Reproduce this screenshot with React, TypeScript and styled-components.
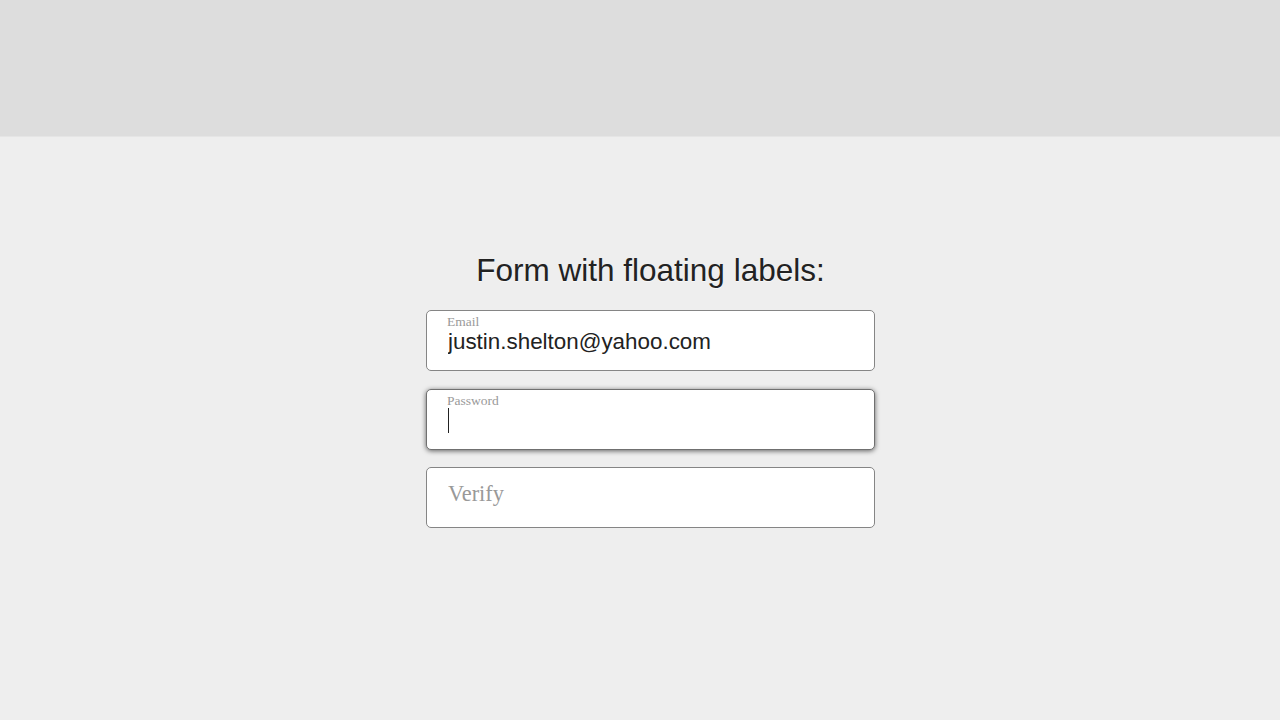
import React from "react";
import styled, { createGlobalStyle, css } from "styled-components";

const Global = createGlobalStyle`
  html, body { margin: 0; padding: 0; background: #eeeeee; }
  body { font-family: "Liberation Sans", Arial, sans-serif; }
  * { box-sizing: border-box; }
`;

const Page = styled.div`
  display: flex;
  flex-direction: column;
  min-height: 720px;
  background: #eeeeee;
`;

const Header = styled.header`
  height: 137px;
  background: #dddddd;
  border-bottom: 1px solid #e5e5e5;
`;

const Main = styled.main`
  display: flex;
  flex-direction: column;
  align-items: center;
  padding: 114px 0 0 21px;
`;

const Title = styled.h1`
  margin: 0 0 21px;
  font-family: "Liberation Sans", Arial, sans-serif;
  font-weight: 400;
  font-size: 31.5px;
  line-height: 38px;
  color: #222222;
  text-shadow: 0 1px 0 rgba(255, 255, 255, 0.6);
`;

const Form = styled.form`
  width: 449px;
  display: flex;
  flex-direction: column;
  gap: 17.5px;
`;

const Field = styled.div`
  position: relative;
  height: 61px;
`;

const Input = styled.input<{ $floated: boolean; $focused?: boolean }>`
  display: block;
  width: 100%;
  height: 61px;
  margin: 0;
  border: 1px solid #858585;
  border-radius: 5px;
  background: #ffffff;
  outline: none;
  font-family: "Liberation Sans", Arial, sans-serif;
  font-size: 22.4px;
  line-height: 25px;
  color: #222222;
  padding: ${(p) => (p.$floated ? "18px 21px 16px" : "13px 21px 21px")};
  caret-color: transparent;
  &::placeholder {
    font-family: "Liberation Serif", "Times New Roman", serif;
    font-size: 22.4px;
    color: #999999;
    opacity: 1;
  }
  ${(p) =>
    p.$focused &&
    css`
      border-color: #707070;
      box-shadow: 0 1px 5px rgba(0, 0, 0, 0.6);
    `}
`;

const FloatLabel = styled.label`
  position: absolute;
  left: 21px;
  top: 4px;
  font-family: "Liberation Serif", "Times New Roman", serif;
  font-size: 13.5px;
  line-height: 15px;
  color: #999999;
  pointer-events: none;
`;

const Caret = styled.span`
  position: absolute;
  left: 22px;
  top: 19px;
  width: 1px;
  height: 25px;
  background: #222222;
`;

export default function App() {
  return (
    <Page>
      <Global />
      <Header />
      <Main>
        <Title>Form with floating labels:</Title>
        <Form onSubmit={(e) => e.preventDefault()}>
          <Field>
            <FloatLabel htmlFor="email">Email</FloatLabel>
            <Input
              id="email"
              type="email"
              $floated
              defaultValue="justin.shelton@yahoo.com"
            />
          </Field>
          <Field>
            <FloatLabel htmlFor="password">Password</FloatLabel>
            <Input id="password" type="password" $floated $focused />
            <Caret />
          </Field>
          <Field>
            <Input id="verify" type="password" $floated={false} placeholder="Verify" />
          </Field>
        </Form>
      </Main>
    </Page>
  );
}
